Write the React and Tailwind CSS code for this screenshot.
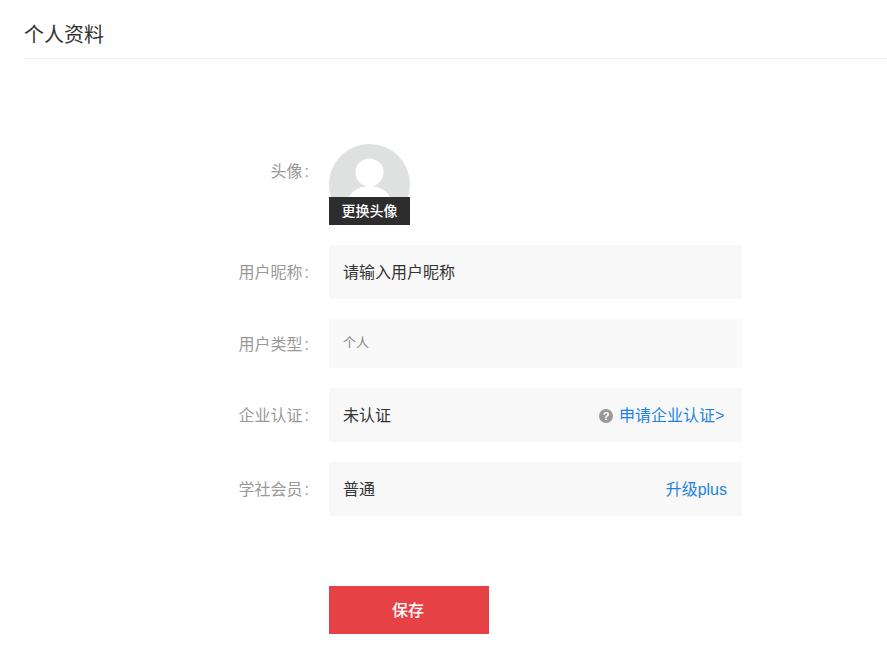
import React from 'react';

const font = "font-['Liberation_Sans','Noto_Sans_CJK_SC',sans-serif]";

const Row = ({ label, className = 'h-[54px] bg-[#f8f8f8]', mb = 'mb-5', children }) => (
  <div className={`flex items-center ${mb}`}>
    <label className="w-[309px] pt-[2px] text-right text-[16px] text-[#999]">{label}<span className="ml-[2px]">:</span></label>
    <div className={`ml-5 flex w-[413px] items-center justify-between pl-[14px] pr-[15px] pt-[2px] text-[16px] text-[#333] ${className}`}>
      {children}
    </div>
  </div>
);

const App = () => {
  return (
    <div className={`h-[671px] w-[887px] overflow-hidden bg-white ${font}`}>
      <div className="ml-6 flex h-[59px] items-center border-b border-[#eeeeee] pt-[12px]">
        <h1 className="text-[20px] font-normal text-[#333]">个人资料</h1>
      </div>

      <div className="pt-[85px]">
        <div className="mb-5 flex">
          <label className="w-[309px] pt-[17px] text-right text-[16px] leading-[22px] text-[#999]">头像<span className="ml-[2px]">:</span></label>
          <div className="relative ml-5 h-[81px] w-[81px]">
            <div className="h-[81px] w-[81px] overflow-hidden rounded-full bg-[#dfe0e0]">
              <svg viewBox="0 0 81 81" className="h-full w-full">
                <circle cx="40.5" cy="28.5" r="14" fill="#fff" />
                <ellipse cx="40.5" cy="62" rx="23" ry="20" fill="#fff" />
              </svg>
            </div>
            <div className="absolute bottom-0 left-0 flex h-[28px] w-[81px] items-center justify-center bg-[#2d2d2d] text-[14px] font-medium text-white">
              更换头像
            </div>
          </div>
        </div>

        <Row label="用户昵称">请输入用户昵称</Row>

        <Row label="用户类型" className="h-[49px] bg-[#f9f9f9]">
          <span className="mb-[4px] text-[13px] text-[#888]">个人</span>
        </Row>

        <Row label="企业认证">
          <span>未认证</span>
          <span className="mr-[2px] flex items-center text-[#1e82e0]">
            <span className="mr-[6px] flex h-[14px] w-[14px] items-center justify-center rounded-full bg-[#999] text-[11px] font-bold leading-none text-white">?</span>
            <span className="w-[106px] whitespace-nowrap">申请企业认证&gt;</span>
          </span>
        </Row>

        <Row label="学社会员" mb="mb-0">
          <span>普通</span>
          <span className="text-[#1e82e0]">升级plus</span>
        </Row>

        <button className="ml-[329px] mt-[70px] h-[48px] w-[160px] bg-[#e64144] pt-[2px] pr-[2px] text-[16px] font-medium text-white">
          保存
        </button>
      </div>
    </div>
  );
};

export default App;
